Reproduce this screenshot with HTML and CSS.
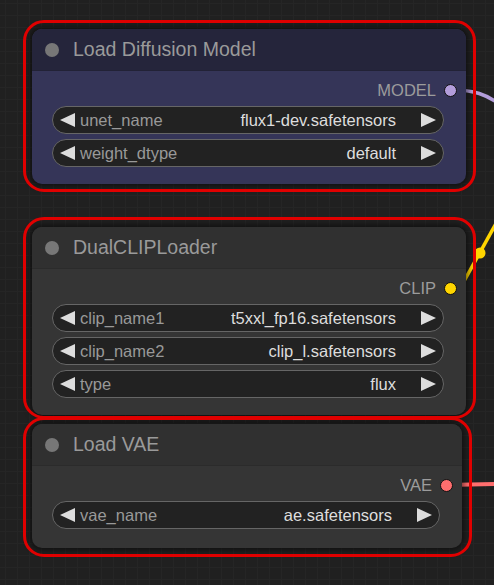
FILE: index.html
```html
<!DOCTYPE html>
<html>
<head>
<meta charset="utf-8">
<link rel="stylesheet" href="styles.css">
</head>
<body>
<div class="canvas">
  <svg class="links" width="494" height="585" viewBox="0 0 494 585">
    <path d="M452 90 C 474 90, 486 94, 502 106" stroke="#b39ddb" stroke-width="3.5" fill="none"/>
    <path d="M458 292 L 498 220" stroke="#ffd500" stroke-width="3.5" fill="none"/>
    <circle cx="480" cy="253" r="5.5" fill="#ffd500"/>
    <path d="M447 485 L 494 484" stroke="#ff6e6e" stroke-width="4" fill="none"/>
  </svg>

  <div class="node node-blue n1">
    <div class="node-head"><span class="head-dot"></span><span class="title">Load Diffusion Model</span></div>
    <div class="node-body">
      <div class="out"><span class="out-label">MODEL</span><span class="slot slot-model"></span></div>
      <div class="widget"><span class="arr"><svg width="15" height="14" viewBox="0 0 15 14"><path d="M0 7 L15 0 L15 14 Z" fill="#ddd"/></svg></span><span class="wl">unet_name</span><span class="wv">flux1-dev.safetensors</span><span class="arr"><svg width="15" height="14" viewBox="0 0 15 14"><path d="M15 7 L0 0 L0 14 Z" fill="#ddd"/></svg></span></div>
      <div class="widget"><span class="arr"><svg width="15" height="14" viewBox="0 0 15 14"><path d="M0 7 L15 0 L15 14 Z" fill="#ddd"/></svg></span><span class="wl">weight_dtype</span><span class="wv">default</span><span class="arr"><svg width="15" height="14" viewBox="0 0 15 14"><path d="M15 7 L0 0 L0 14 Z" fill="#ddd"/></svg></span></div>
    </div>
  </div>

  <div class="node n2">
    <div class="node-head"><span class="head-dot"></span><span class="title">DualCLIPLoader</span></div>
    <div class="node-body">
      <div class="out"><span class="out-label">CLIP</span><span class="slot slot-clip"></span></div>
      <div class="widget"><span class="arr"><svg width="15" height="14" viewBox="0 0 15 14"><path d="M0 7 L15 0 L15 14 Z" fill="#ddd"/></svg></span><span class="wl">clip_name1</span><span class="wv">t5xxl_fp16.safetensors</span><span class="arr"><svg width="15" height="14" viewBox="0 0 15 14"><path d="M15 7 L0 0 L0 14 Z" fill="#ddd"/></svg></span></div>
      <div class="widget"><span class="arr"><svg width="15" height="14" viewBox="0 0 15 14"><path d="M0 7 L15 0 L15 14 Z" fill="#ddd"/></svg></span><span class="wl">clip_name2</span><span class="wv">clip_l.safetensors</span><span class="arr"><svg width="15" height="14" viewBox="0 0 15 14"><path d="M15 7 L0 0 L0 14 Z" fill="#ddd"/></svg></span></div>
      <div class="widget"><span class="arr"><svg width="15" height="14" viewBox="0 0 15 14"><path d="M0 7 L15 0 L15 14 Z" fill="#ddd"/></svg></span><span class="wl">type</span><span class="wv">flux</span><span class="arr"><svg width="15" height="14" viewBox="0 0 15 14"><path d="M15 7 L0 0 L0 14 Z" fill="#ddd"/></svg></span></div>
    </div>
  </div>

  <div class="node n3">
    <div class="node-head"><span class="head-dot"></span><span class="title">Load VAE</span></div>
    <div class="node-body">
      <div class="out"><span class="out-label">VAE</span><span class="slot slot-vae"></span></div>
      <div class="widget"><span class="arr"><svg width="15" height="14" viewBox="0 0 15 14"><path d="M0 7 L15 0 L15 14 Z" fill="#ddd"/></svg></span><span class="wl">vae_name</span><span class="wv">ae.safetensors</span><span class="arr"><svg width="15" height="14" viewBox="0 0 15 14"><path d="M15 7 L0 0 L0 14 Z" fill="#ddd"/></svg></span></div>
    </div>
  </div>

  <div class="ring r1"></div>
  <div class="ring r2"></div>
  <div class="ring r3"></div>
</div>
</body>
</html>
```

FILE: styles.css
```css
html, body {
  margin: 0;
  padding: 0;
  background: #202020;
}
.canvas {
  position: relative;
  width: 494px;
  height: 585px;
  overflow: hidden;
  font-family: "Liberation Sans", Arial, sans-serif;
  background-color: #202020;
  background-image:
    linear-gradient(to right, #252525 1px, transparent 1px),
    linear-gradient(to bottom, #252525 1px, transparent 1px);
  background-size: 12px 12px;
  background-position: 5px 3px;
}
.links {
  position: absolute;
  left: 0;
  top: 0;
}
.node {
  position: absolute;
  left: 32px;
  width: 434px;
  background: #353535;
  border-radius: 10px;
  box-shadow: 0 0 6px 2px rgba(0, 0, 0, 0.55);
  overflow: hidden;
}
.n1 { top: 29px; }
.n2 { top: 227px; }
.n3 { top: 424px; width: 430px; }
.n3 .node-body { padding-bottom: 19px; }
.node-head {
  height: 42px;
  display: flex;
  align-items: center;
  background: #303030;
  border-bottom: 1px solid #2b2b2b;
  box-sizing: border-box;
  padding-left: 13px;
}
.node-blue { background: #353558; }
.node-blue .node-head { background: #25253b; border-bottom-color: #222236; }
.head-dot {
  width: 14px;
  height: 14px;
  border-radius: 50%;
  background: #777;
  margin-right: 14px;
}
.title {
  font-size: 19.5px;
  color: #9a9a9a;
}
.node-body {
  display: flex;
  flex-direction: column;
  gap: 5px;
  padding: 9px 22px 17px 20px;
}
.out {
  height: 20px;
  display: flex;
  align-items: center;
  justify-content: flex-end;
  margin-right: -14px;
  margin-bottom: 1px;
  gap: 8px;
}
.out-label {
  font-size: 16.5px;
  color: #9c9c9c;
}
.slot {
  width: 11px;
  height: 11px;
  border-radius: 50%;
  border: 1.5px solid #111;
  margin-right: 1px;
}
.slot-model { background: #b39ddb; }
.slot-clip { background: #ffd500; }
.slot-vae { background: #ff6e6e; }
.widget {
  height: 28px;
  box-sizing: border-box;
  border: 1px solid #666;
  border-radius: 14px;
  background: #222;
  display: flex;
  align-items: center;
  padding: 0 7px 0 7px;
  font-size: 16.5px;
}
.arr {
  display: flex;
  width: 15px;
  height: 14px;
}
.wl {
  color: #999;
  margin-left: 5px;
}
.wv {
  color: #ddd;
  margin-left: auto;
  margin-right: 25px;
}
.ring {
  position: absolute;
  border: 3px solid #e00000;
  border-radius: 21px;
  box-sizing: border-box;
}
.r1 { left: 23px; top: 20px; width: 453px; height: 172px; }
.r2 { left: 23px; top: 217px; width: 453px; height: 202px; }
.r3 { left: 23px; top: 417px; width: 449px; height: 140px; }
```
